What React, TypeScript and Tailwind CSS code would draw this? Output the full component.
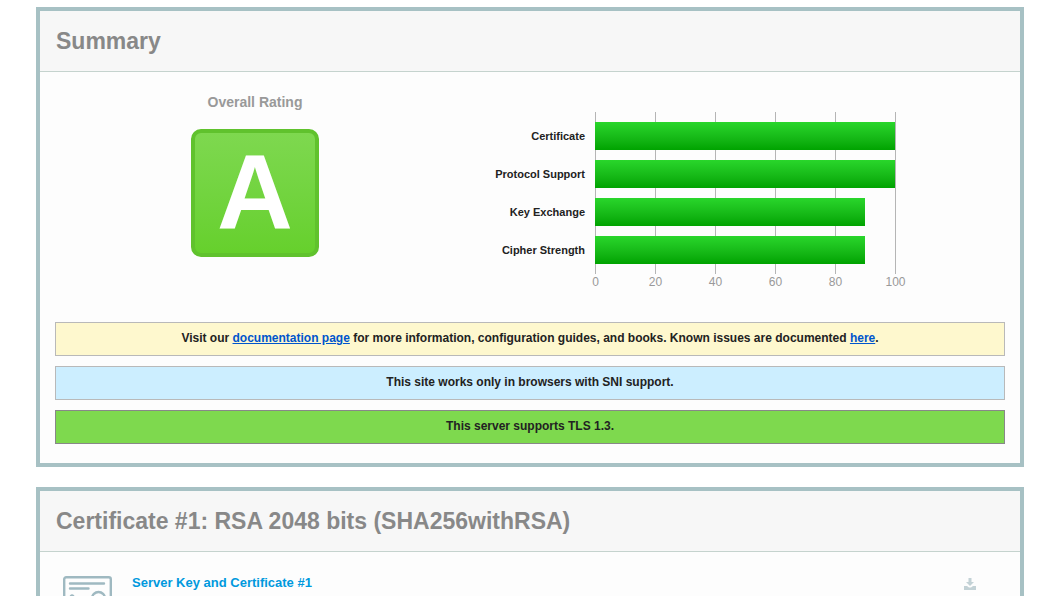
import React from 'react';

interface Score {
  label: string;
  value: number;
}

interface PanelProps {
  title: string;
  children: React.ReactNode;
}

const scores: Score[] = [
  { label: 'Certificate', value: 100 },
  { label: 'Protocol Support', value: 100 },
  { label: 'Key Exchange', value: 90 },
  { label: 'Cipher Strength', value: 90 },
];

const ticks = [0, 20, 40, 60, 80, 100];

const Panel: React.FC<PanelProps> = ({ title, children }) => (
  <section className="border-4 border-[#a7c1c4] bg-[#fdfdfd]">
    <h2 className="border-b border-[#c5d3ce] bg-[#f7f7f7] px-4 py-3 text-[23px] leading-9 font-bold text-[#888888]">{title}</h2>
    {children}
  </section>
);

const Chart: React.FC = () => (
  <div className="flex gap-[10px] pt-6">
    <ul className="flex w-[130px] flex-col gap-[10px] py-[10px] text-right text-[11px] leading-7 font-bold text-[#222222]">
      {scores.map((score) => (
        <li key={score.label}>{score.label}</li>
      ))}
    </ul>
    <div className="w-[301px]">
      <div className="relative flex flex-col gap-[10px] py-[10px]">
        {/* grid lines sit behind the bars */}
        <div className="absolute inset-0 flex justify-between">
          {ticks.map((tick) => (
            <div key={tick} className="w-px bg-[#b5b5b5]" />
          ))}
        </div>
        {scores.map((score) => (
          <div key={score.label} className="relative mr-px h-7">
            <div className="h-full bg-linear-to-b from-[#29d62b] to-[#00a300]" style={{ width: `${score.value}%` }} />
          </div>
        ))}
      </div>
      <div className="flex justify-between text-[12px] leading-4 text-[#999999]">
        {ticks.map((tick) => (
          <span key={tick} className="flex w-px justify-center">{tick}</span>
        ))}
      </div>
    </div>
  </div>
);

const CertificateIcon: React.FC = () => (
  <svg width="49" height="42" viewBox="0 0 49 42" fill="none" stroke="#9fb9c1" strokeWidth="2.4" strokeLinecap="round" aria-hidden="true">
    <path d="M30 33H3.2a2 2 0 0 1-2-2V3.2a2 2 0 0 1 2-2h42.6a2 2 0 0 1 2 2V31a2 2 0 0 1-2 2H43" />
    <path d="M7 7.5h34M7 12.5h18.5" />
    <path d="M7 22c1-3 3-4 4 0s3 1 5 0 3 1 6 0" />
    <circle cx="35.5" cy="22.5" r="6.5" />
    <path d="M32 28v12l4-3 4 3V28" />
  </svg>
);

const DownloadIcon: React.FC = () => (
  <svg width="12" height="12" viewBox="0 0 12 12" fill="#c3d2d6" aria-hidden="true">
    <path d="M4.5 0h3v4H10L6 8 2 4h2.5z" />
    <path d="M0 8h3l2 1.5h2L9 8h3v4H0z" />
  </svg>
);

const App: React.FC = () => (
  <main className="flex h-screen flex-col gap-5 overflow-hidden bg-white pt-[7px] pr-[13px] pl-9 font-['Liberation_Sans',Arial,sans-serif]">
    <Panel title="Summary">
      <div className="px-[15px] pt-4 pb-[19px]">
        <div className="flex">
          <div className="flex w-[400px] flex-col items-center pt-1">
            <h3 className="text-[14px] leading-5 font-bold text-[#999999]">Overall Rating</h3>
            <div className="mt-[17px] flex h-32 w-32 items-center justify-center rounded-[10px] border-4 border-[#60c22d] bg-linear-to-b from-[#7ed84f] to-[#66d02c] pb-[2px] text-[105px] leading-none font-bold text-white">
              A
            </div>
          </div>
          <Chart />
        </div>
        <div className="mt-8 flex flex-col gap-[10px] text-center text-[12px] leading-4 font-bold text-[#222222]">
          <p className="border border-[#b9b9b9] bg-[#fef8ce] pt-[7px] pb-[9px]">
            Visit our <a href="#documentation" className="text-[#0055cc] underline">documentation page</a> for more information, configuration guides, and books. Known issues are documented <a href="#known-issues" className="text-[#0055cc] underline">here</a>.
          </p>
          <p className="border border-[#b9b9b9] bg-[#cceeff] pt-[7px] pb-[9px]">This site works only in browsers with SNI support.</p>
          <p className="border border-[#888888] bg-[#7ed94e] pt-[7px] pb-[9px]">This server supports TLS 1.3.</p>
        </div>
      </div>
    </Panel>

    <Panel title="Certificate #1: RSA 2048 bits (SHA256withRSA)">
      <div className="flex items-start px-[23px] py-6">
        <CertificateIcon />
        <h3 className="ml-5 flex-1 text-[13px] leading-[14px] font-bold text-[#0099dd]">Server Key and Certificate #1</h3>
        <a href="#download" aria-label="Download certificate" className="mt-[2px] mr-[21px]">
          <DownloadIcon />
        </a>
      </div>
    </Panel>
  </main>
);

export default App;
